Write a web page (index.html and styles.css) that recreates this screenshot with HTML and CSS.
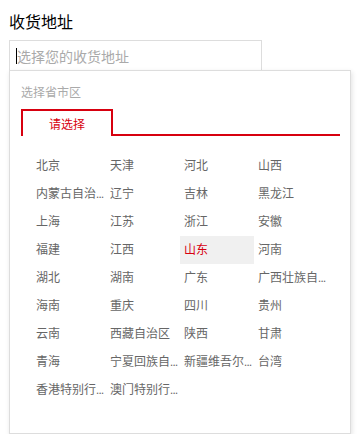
FILE: index.html
```html
<!DOCTYPE html>
<html lang="zh">
<head>
<meta charset="utf-8">
<link rel="stylesheet" href="styles.css">
</head>
<body>
<div class="page">
  <div class="title">收货地址</div>
  <div class="field"><span class="caret"></span><span class="placeholder">选择您的收货地址</span></div>
  <div class="popup">
    <div class="hint">选择省市区</div>
    <div class="tabs"><div class="tab">请选择</div></div>
    <div class="grid">
      <div class="cell">北京</div><div class="cell">天津</div><div class="cell">河北</div><div class="cell">山西</div>
      <div class="cell">内蒙古自治区</div><div class="cell">辽宁</div><div class="cell">吉林</div><div class="cell">黑龙江</div>
      <div class="cell">上海</div><div class="cell">江苏</div><div class="cell">浙江</div><div class="cell">安徽</div>
      <div class="cell">福建</div><div class="cell">江西</div><div class="cell active">山东</div><div class="cell">河南</div>
      <div class="cell">湖北</div><div class="cell">湖南</div><div class="cell">广东</div><div class="cell">广西壮族自治区</div>
      <div class="cell">海南</div><div class="cell">重庆</div><div class="cell">四川</div><div class="cell">贵州</div>
      <div class="cell">云南</div><div class="cell">西藏自治区</div><div class="cell">陕西</div><div class="cell">甘肃</div>
      <div class="cell">青海</div><div class="cell">宁夏回族自治区</div><div class="cell">新疆维吾尔自治区</div><div class="cell">台湾</div>
      <div class="cell">香港特别行政区</div><div class="cell">澳门特别行政区</div>
    </div>
  </div>
</div>
</body>
</html>
```
FILE: styles.css
```css
html, body {
  margin: 0;
  padding: 0;
  background: #fff;
}
body {
  font-family: "Noto Sans CJK SC", "Noto Sans", sans-serif;
}
.page {
  padding: 10px 0 0 9px;
}
.title {
  font-size: 16px;
  line-height: 22px;
  color: #000;
}
.field {
  margin-top: 8px;
  width: 253px;
  height: 31px;
  box-sizing: border-box;
  border: 1px solid #ddd;
  padding-left: 6px;
  display: flex;
  align-items: center;
  font-size: 14px;
  color: #aaa;
}
.caret {
  width: 1px;
  height: 16px;
  background: #000;
}
.placeholder {
  line-height: 20px;
}
.popup {
  margin-top: -1px;
  width: 342px;
  height: 364px;
  box-sizing: border-box;
  border: 1px solid #ddd;
  box-shadow: 1px 2px 5px rgba(0,0,0,0.12);
  padding: 13px 10px 0 11px;
  background: #fff;
}
.hint {
  font-size: 12px;
  line-height: 16px;
  color: #aaa;
}
.tabs {
  margin-top: 9px;
  height: 25px;
  border-bottom: 2px solid #d7000f;
  display: flex;
}
.tab {
  width: 92px;
  height: 27px;
  box-sizing: border-box;
  border: 2px solid #d7000f;
  border-bottom: none;
  background: #fff;
  color: #d7000f;
  font-size: 12px;
  line-height: 25px;
  text-align: center;
}
.grid {
  margin: 16px 0 0 11px;
  display: grid;
  grid-template-columns: repeat(4, 74px);
  grid-auto-rows: 28px;
}
.cell {
  padding: 0 0 0 4px;
  font-family: Roboto, "Noto Sans CJK SC", sans-serif;
  font-size: 12px;
  line-height: 28px;
  color: #666;
  white-space: nowrap;
  overflow: hidden;
  text-overflow: ellipsis;
}
.cell.active {
  background: #f0f0f0;
  color: #d7000f;
}
```
